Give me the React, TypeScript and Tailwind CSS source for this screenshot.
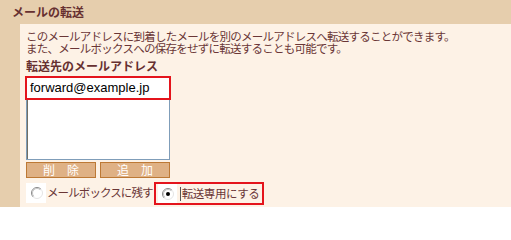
import React from "react";

const jp = { fontFamily: '"Noto Sans CJK JP", "Noto Sans", sans-serif' };

function Radio({ checked }: { checked?: boolean }) {
  return (
    <svg width="12" height="12" viewBox="0 0 12 12">
      <circle cx="6" cy="6" r="5.5" fill="#ffffff" />
      <path d="M9.9 2.1 A5.5 5.5 0 0 0 2.1 9.9" stroke="#8a8a8a" strokeWidth="1" fill="none" />
      <path d="M9.9 2.1 A5.5 5.5 0 0 1 2.1 9.9" stroke="#e4e4e4" strokeWidth="1" fill="none" />
      <path d="M9.2 2.8 A4.5 4.5 0 0 0 2.8 9.2" stroke="#c4c4c4" strokeWidth="1" fill="none" />
      {checked && <circle cx="6" cy="6" r="2" fill="#000000" />}
    </svg>
  );
}

export default function App() {
  return (
    <div className="w-[511px] h-[207px] bg-[#e6cead] flex flex-col text-[#6a3636]" style={jp}>
      <div className="h-6 pl-3 pt-[4px] text-[12px] leading-[16px] font-bold text-[#663030]">
        メールの転送
      </div>
      <div className="ml-5 flex-1 bg-[#fdf2e6] pl-[6px] pt-[6px]">
        <p className="text-[11.5px] leading-[12px] tracking-[-0.75px]">
          このメールアドレスに到着したメールを別のメールアドレスへ転送することができます。
          <br />
          また、メールボックスへの保存をせずに転送することも可能です。
        </p>
        <div className="mt-[5px] text-[12px] leading-[13px] font-bold text-[#663030]">
          転送先のメールアドレス
        </div>
        <div className="relative mt-[4px] w-[144px] h-[84px] bg-white border border-[#7f9db9] shadow-[inset_1px_1px_0_#716f64]">
          <div
            className="absolute -left-[2px] -top-[1px] w-[146px] h-[24px] border-2 border-[#e4141c] bg-white pl-[3px] flex items-center text-[13px] text-black"
            style={{ fontFamily: '"Liberation Sans", Arial, sans-serif' }}
          >
            forward@example.jp
          </div>
        </div>
        <div className="mt-[2px] flex gap-[4px]">
          <button className="w-[70px] h-[16px] bg-[#dfb185] border border-[#bd7935] text-white text-[12px] leading-[14px] flex items-center justify-center">
            削　除
          </button>
          <button className="w-[70px] h-[16px] bg-[#dfb185] border border-[#bd7935] text-white text-[12px] leading-[14px] flex items-center justify-center">
            追　加
          </button>
        </div>
        <div className="mt-[4px] flex items-start h-[23px] text-[11.5px]">
          <div className="flex items-center h-[21px]">
            <div className="w-[20px] h-[20px] bg-white flex items-center pl-[5px] pt-[1px]">
              <Radio />
            </div>
            <span className="ml-[1px] tracking-[-0.9px]">メールボックスに残す</span>
          </div>
          <div className="ml-[1px] h-[23px] w-[110px] border-2 border-[#e4141c] flex items-center pl-[2px]">
            <div className="w-[19px] h-[19px] bg-white flex items-center pl-[4px]">
              <Radio checked />
            </div>
            <div className="ml-[3px] w-px h-[14px] bg-[#555555]" />
            <span className="ml-[1px] tracking-[-0.4px]">転送専用にする</span>
          </div>
        </div>
      </div>
    </div>
  );
}
